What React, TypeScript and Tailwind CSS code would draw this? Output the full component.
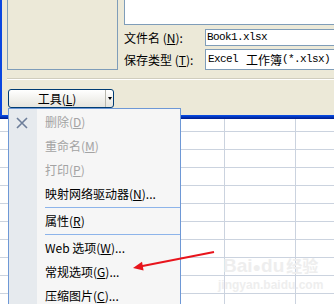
import React from "react";

type Item = { pre: string; key?: string; post?: string; disabled?: boolean } | "sep";

const menu: Item[] = [
  { pre: "删除(", key: "D", post: ")", disabled: true },
  { pre: "重命名(", key: "M", post: ")", disabled: true },
  { pre: "打印(", key: "P", post: ")", disabled: true },
  { pre: "映射网络驱动器(", key: "N", post: ")..." },
  "sep",
  { pre: "属性(", key: "R", post: ")" },
  "sep",
  { pre: "Web 选项(", key: "W", post: ")..." },
  { pre: "常规选项(", key: "G", post: ")..." },
  { pre: "压缩图片(", key: "C", post: ")..." },
];

const rows = Array.from({ length: 10 });

export default function App() {
  return (
    <div className="relative h-[304px] w-[334px] overflow-hidden bg-white font-['Noto_Sans_CJK_SC',sans-serif] text-[12px] text-black">
      {/* save dialog */}
      <div className="flex h-[115px] flex-col border-l-2 border-[#0A46E0] bg-[#ECE9D8]">
        <div className="flex gap-[6px] pl-[5px]">
          <div className="h-[70px] w-[111px] border border-t-0 border-[#7F9DB9]" />
          <div className="flex flex-1 flex-col">
            <div className="h-[25px] border border-t-0 border-r-0 border-[#7F9DB9] bg-white" />
            <div className="mt-[4px] flex h-[17px] items-center">
              <span className="w-[81px] leading-none">
                文件名 (<u>N</u>):
              </span>
              <div className="flex h-[17px] flex-1 items-center border border-r-0 border-[#7F9DB9] bg-white pl-px font-['Liberation_Mono',monospace] text-[11px] tracking-[-0.6px]">
                Book1.xlsx
              </div>
            </div>
            <div className="mt-[3px] flex h-[21px] items-center">
              <span className="w-[81px] leading-none">
                保存类型 (<u>T</u>):
              </span>
              <div className="flex h-[21px] flex-1 items-center border border-r-0 border-[#7F9DB9] bg-white pl-[2px] font-['Liberation_Mono',monospace] text-[11px] tracking-[-0.6px]">
                Excel
                <span className="ml-[8px] font-['Noto_Sans_CJK_SC',sans-serif] text-[12px] tracking-normal">工作簿</span>
                (*.xlsx)
              </div>
            </div>
          </div>
        </div>
        <div className="mt-[8px] ml-[5px] h-[2px] border-t border-b border-t-[#D0CDBE] border-b-white" />
        <div className="mt-[9px] ml-[6px] flex h-[19px] w-[106px] items-center rounded-[3px] border border-[#003C74] bg-gradient-to-b from-white to-[#E6E5DE]">
          <span className="flex-1 text-center leading-none">
            工具(<u>L</u>)
          </span>
          <div className="flex h-full w-[8px] items-center justify-center border-l border-[#B8B7AE]">
            <div className="h-0 w-0 border-x-[2px] border-t-[3px] border-x-transparent border-t-black" />
          </div>
        </div>
      </div>
      <div className="h-[4px] bg-gradient-to-b from-[#0A50EC] to-[#001A8C]" />

      {/* spreadsheet grid */}
      <div className="flex flex-col">
        <div className="flex h-[13px] border-b border-[#CBD3DF]">
          <div className="w-[225px] border-r border-[#CBD3DF]" />
          <div className="w-[71px] border-r border-[#CBD3DF]" />
        </div>
        {rows.map((_, i) => (
          <div key={i} className="flex h-[18px] shrink-0 border-b border-[#CBD3DF]">
            <div className="w-[225px] border-r border-[#CBD3DF]" />
            <div className="w-[71px] border-r border-[#CBD3DF]" />
          </div>
        ))}
      </div>

      {/* watermark */}
      <div className="absolute left-[218px] top-[256px] flex flex-col items-center text-[#EEEEEE]">
        <span className="font-['Liberation_Sans',sans-serif] text-[19px] font-bold leading-none">
          Bai<span className="text-[14px]">●</span>du<span className="ml-[2px] font-['Noto_Sans_CJK_SC',sans-serif] text-[16px]">经验</span>
        </span>
        <span className="mt-[4px] font-['Liberation_Sans',sans-serif] text-[12px] font-bold leading-none">jingyan.baidu.com</span>
      </div>

      {/* dropdown menu */}
      <div className="absolute left-[8px] top-[108px] flex h-[210px] w-[173px] border border-[#6E98D6] bg-[#F6F6F6]">
        <div className="relative w-[28px] bg-[#E6EAEE]">
          <svg className="absolute left-[7px] top-[8px]" width="12" height="12" viewBox="0 0 12 12">
            <path d="M1 1 L11 11 M11 1 L1 11" stroke="#6D7E9A" strokeWidth="1.6" fill="none" />
          </svg>
        </div>
        <div className="flex flex-1 flex-col pt-px">
          {menu.map((item, i) =>
            item === "sep" ? (
              <div key={i} className="flex h-[3px] flex-col pl-[8px] pt-px">
                <div className="h-px bg-[#8DB4EA]" />
              </div>
            ) : (
              <div
                key={i}
                className={`flex h-[24px] items-center pl-[8px] ${item.disabled ? "text-[#A3A3A3]" : "text-black"}`}
              >
                {item.pre}
                <u>{item.key}</u>
                {item.post}
              </div>
            )
          )}
        </div>
      </div>

      {/* red arrow */}
      <svg className="absolute left-0 top-0" width="334" height="304" viewBox="0 0 334 304">
        <line x1="214" y1="252" x2="140" y2="266.6" stroke="#E8141C" strokeWidth="2" />
        <polygon points="133,268 143.6,270.5 142,261.8" fill="#E8141C" />
      </svg>
    </div>
  );
}
